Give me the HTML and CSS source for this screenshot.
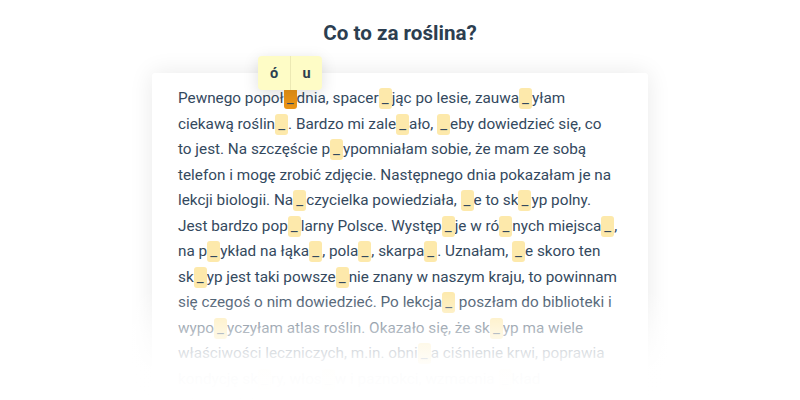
FILE: index.html
```html
<!DOCTYPE html>
<html lang="pl">
<head>
    <meta charset="UTF-8">
    <title>Co to za roślina?</title>
    <link rel="stylesheet" href="styles.css">
</head>
<body>
    <div class="exercise">
        <h1>Co to za roślina?</h1>

        <div class="text-card">
            <p class="story">
                Pewnego <span class="word">popoł<span class="gap active">_<span class="choices"><span class="choice">ó</span><span class="choice">u</span></span></span>dnia,</span>
                <span class="word">spacer<span class="gap">_</span>jąc</span> po lesie, <span class="word">zauwa<span class="gap">_</span>yłam</span>
                ciekawą <span class="word">roślin<span class="gap">_</span>.</span>
                Bardzo mi <span class="word">zale<span class="gap">_</span>ało,</span> <span class="word"><span class="gap">_</span>eby</span> dowiedzieć się, co to&nbsp;jest.
                Na szczęście <span class="word">p<span class="gap">_</span>ypomniałam</span> sobie, że mam ze sobą telefon i mogę zrobić zdjęcie.
                Następnego dnia pokazałam je na lekcji biologii. <span class="word">Na<span class="gap">_</span>czycielka</span> powiedziała,
                <span class="word"><span class="gap">_</span>e</span> to <span class="word">sk<span class="gap">_</span>yp</span> polny.
                Jest bardzo <span class="word">pop<span class="gap">_</span>larny</span> Polsce.
                <span class="word">Występ<span class="gap">_</span>je</span> w <span class="word">ró<span class="gap">_</span>nych</span>
                <span class="word">miejsca<span class="gap">_</span>,</span> na <span class="word">p<span class="gap">_</span>ykład</span>
                na <span class="word">łąka<span class="gap">_</span>,</span> <span class="word">pola<span class="gap">_</span>,</span>
                <span class="word">skarpa<span class="gap">_</span>.</span> Uznałam,
                <span class="word"><span class="gap">_</span>e</span> skoro ten <span class="word">sk<span class="gap">_</span>yp</span> jest taki
                <span class="word">powsze<span class="gap">_</span>nie</span> znany w naszym kraju,
                to powinnam się czegoś o nim dowiedzieć. Po <span class="word">lekcja<span class="gap">_</span></span> poszłam do biblioteki i
                <span class="word">wypo<span class="gap">_</span>yczyłam</span> atlas roślin. Okazało się, że <span class="word">sk<span class="gap">_</span>yp</span> ma wiele właściwości
                leczniczych, m.in. <span class="word">obni<span class="gap">_</span>a</span> ciśnienie krwi, poprawia kondycję
                <span class="word">sk<span class="gap">_</span>ry,</span> <span class="word">włos<span class="gap">_</span>w</span> i paznokci, wzmacnia
                <span class="word"><span class="gap">_</span>kład</span> odpornościowy.
            </p>
        </div>
    </div>

    <div class="fade"></div>
</body>
</html>
```

FILE: styles.css
```css
* {
    margin: 0;
    padding: 0;
    box-sizing: border-box;
}

body {
    font-family: 'Roboto', 'Liberation Sans', sans-serif;
    background: #fff;
    color: #34495e;
    overflow: hidden;
}

.exercise {
    display: flex;
    flex-direction: column;
    align-items: center;
    padding-top: 20px;
}

h1 {
    font-size: 20.6px;
    font-weight: bold;
    color: #2c3e50;
    line-height: 26px;
    margin-bottom: 27px;
}

.text-card {
    width: 496px;
    background: #fff;
    border-radius: 3px;
    box-shadow: 0 0 24px rgba(0, 0, 0, 0.09);
    padding: 13px 28px 40px 26px;
}

.story {
    font-size: 15.3px;
    line-height: 25.5px;
}

.word {
    white-space: nowrap;
}

.gap {
    position: relative;
    display: inline-block;
    min-width: 13px;
    padding: 0 2px;
    line-height: 21px;
    text-align: center;
    background: #fde9ab;
    border-radius: 3px;
    color: #34495e;
}

.gap.active {
    background: #ea9416;
}

.choices {
    position: absolute;
    bottom: calc(100% - 2px);
    left: 50%;
    transform: translateX(-50%);
    display: flex;
    background: #fefcc6;
    border-radius: 4px;
    box-shadow: 0 4px 16px rgba(0, 0, 0, 0.13);
}

.choice {
    width: 32px;
    height: 34px;
    display: flex;
    align-items: center;
    justify-content: center;
    font-size: 14.5px;
    font-weight: bold;
    color: #2c3e50;
}

.choice + .choice {
    border-left: 1px solid #ece9b4;
}

.fade {
    position: absolute;
    left: 0;
    right: 0;
    top: 290px;
    height: 110px;
    background: linear-gradient(to bottom, rgba(255, 255, 255, 0) 0%, rgba(255, 255, 255, 0.65) 40%, rgba(255, 255, 255, 0.98) 72%, #fff 100%);
}
```
